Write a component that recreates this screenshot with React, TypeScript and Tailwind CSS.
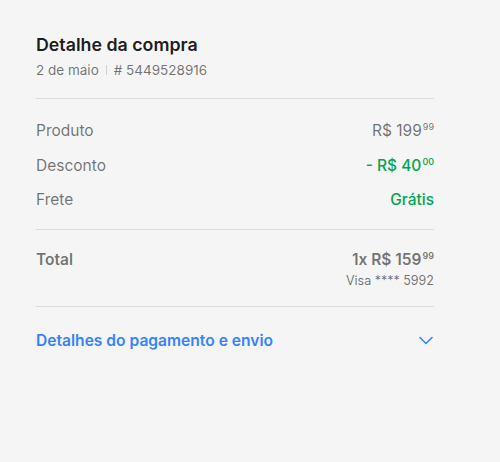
type Row = {
  label: string;
  value: React.ReactNode;
  green?: boolean;
};

const Price = ({ prefix, whole, cents }: { prefix: string; whole: string; cents: string }) => (
  <span>
    {prefix}
    {whole}
    <span className="relative top-[-6px] ml-[1px] align-baseline text-[9px] leading-none">{cents}</span>
  </span>
);

const rows: Row[] = [
  { label: 'Produto', value: <Price prefix="R$ " whole="199" cents="99" /> },
  { label: 'Desconto', value: <Price prefix="- R$ " whole="40" cents="00" />, green: true },
  { label: 'Frete', value: 'Grátis', green: true },
];

const App = () => {
  return (
    <div
      className="min-h-[462px] bg-[#f5f5f5] pl-[36px] pt-[34px]"
      style={{ fontFamily: 'Inter, "Noto Sans", sans-serif' }}
    >
      <div className="w-[398px]">
        <h1 className="text-[17.8px] font-semibold leading-[22px] text-[rgba(0,0,0,0.9)]">
          Detalhe da compra
        </h1>
        <p className="mt-[5px] flex items-center text-[13.5px] leading-[18px] text-[rgba(0,0,0,0.55)]">
          <span>2 de maio</span>
          <span className="mx-[7px] h-[10px] w-px bg-[#d0d0d0]" />
          <span># 5449528916</span>
        </p>

        <div className="mt-[19px] border-t border-[#dcdcdc]" />

        <ul className="flex flex-col gap-[13.5px] pt-[21px] pb-[19px]">
          {rows.map((row) => (
            <li key={row.label} className="flex items-center justify-between text-[15.5px] leading-[21px]">
              <span className="text-[rgba(0,0,0,0.55)]">{row.label}</span>
              <span
                className={
                  row.green ? 'font-medium text-[#00a650]' : 'text-[rgba(0,0,0,0.55)]'
                }
              >
                {row.value}
              </span>
            </li>
          ))}
        </ul>

        <div className="border-t border-[#dcdcdc]" />

        <div className="flex justify-between pt-[19px] pb-[17px]">
          <span className="text-[15.5px] font-semibold leading-[21px] text-[rgba(0,0,0,0.55)]">
            Total
          </span>
          <div className="flex flex-col items-end">
            <span className="text-[15.5px] font-semibold leading-[21px] text-[rgba(0,0,0,0.55)]">
              <Price prefix="1x R$ " whole="159" cents="99" />
            </span>
            <span className="mt-[2px] text-[12.5px] leading-[17px] text-[rgba(0,0,0,0.55)]">
              Visa **** 5992
            </span>
          </div>
        </div>

        <div className="border-t border-[#dcdcdc]" />

        <button className="flex w-full items-center justify-between pt-[23px] text-left">
          <span className="text-[15.6px] font-semibold leading-[21px] text-[#3483fa]">
            Detalhes do pagamento e envio
          </span>
          <svg width="14" height="9" viewBox="0 0 14 9" className="mr-[1px]" fill="none">
            <polyline
              points="1,1.5 7,7.5 13,1.5"
              stroke="#3483fa"
              strokeWidth="1.6"
              strokeLinecap="round"
              strokeLinejoin="round"
            />
          </svg>
        </button>
      </div>
    </div>
  );
};

export default App;
